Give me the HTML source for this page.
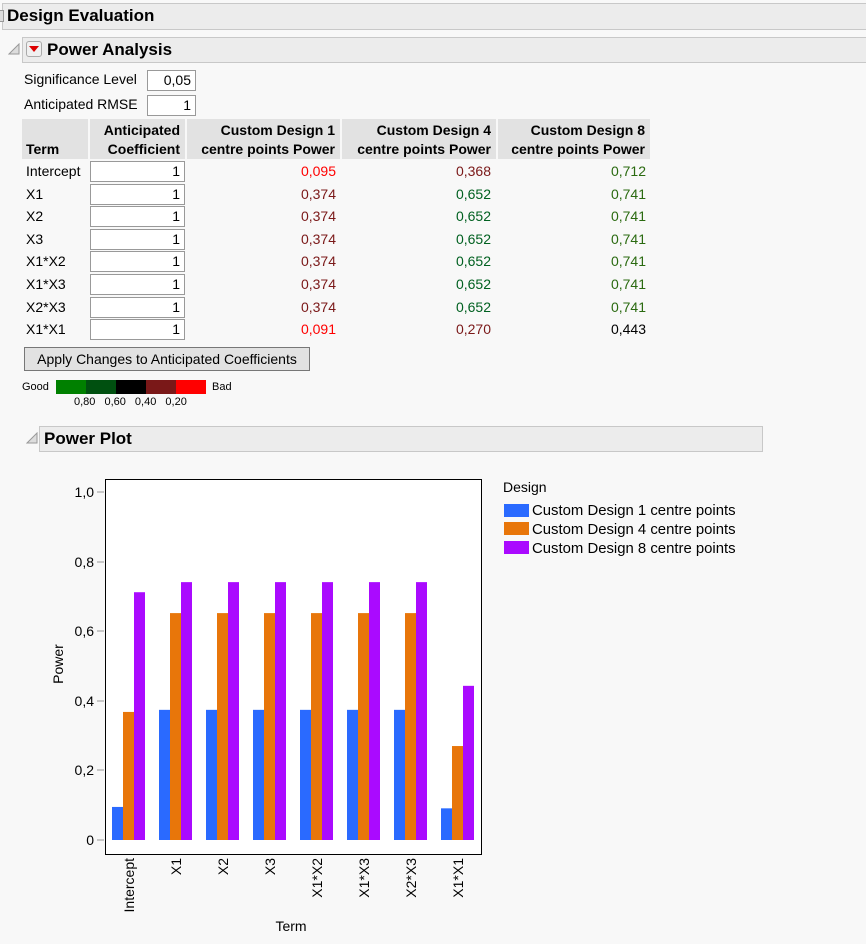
<!DOCTYPE html>
<html><head><style>
body{margin:0;width:866px;height:944px;background:#f8f8f8;font-family:"Liberation Sans",sans-serif;color:#000;position:relative;overflow:hidden;font-size:14px}
.a{position:absolute;white-space:nowrap}
.bar{position:absolute;background:#ececec;border:1px solid #c8c8c8;font-weight:bold;font-size:17px;line-height:24px;padding-left:4px;box-sizing:border-box}
.inp{position:absolute;background:#fff;border:1px solid #999;box-sizing:border-box;text-align:right;padding-right:4px;line-height:19px;font-size:14px}
.th{position:absolute;background:#e2e2e2;font-weight:bold;text-align:right;font-size:14px;line-height:19px;box-sizing:border-box;padding-right:5px}
.r{position:absolute;text-align:right;font-size:14px}
</style></head><body>
<div class="bar" style="left:2px;top:3px;width:870px;height:27px;font-size:17px">Design Evaluation</div>
<div class="a" style="left:-3px;top:10px;width:5px;height:10px;border:1px solid #999;background:#ddd"></div>
<svg class="a" style="left:8px;top:43px" width="12" height="12"><path d="M1 11 L11 1 L11 11Z" fill="#ddd" stroke="#999"/></svg>
<div class="bar" style="left:22px;top:37px;width:850px;height:26px;padding-left:24px">Power Analysis</div>
<div class="a" style="left:26px;top:41px;width:16px;height:16px;border:1px solid #aaa;border-radius:3px;background:#f0f0f0;box-sizing:border-box"></div>
<svg class="a" style="left:29px;top:45px" width="10" height="8"><path d="M0 1 L10 1 L5 7Z" fill="#d00"/></svg>
<div class="a" style="left:24px;top:71px">Significance Level</div>
<div class="inp" style="left:147px;top:70px;width:49px;height:21px">0,05</div>
<div class="a" style="left:24px;top:96px">Anticipated RMSE</div>
<div class="inp" style="left:147px;top:95px;width:49px;height:21px">1</div>
<div class="th" style="left:22px;top:119px;width:66px;height:40px;text-align:left;padding:21px 0 0 4px">Term</div>
<div class="th" style="left:90px;top:119px;width:95px;height:40px;padding-top:2px">Anticipated<br>Coefficient</div>
<div class="th" style="left:187px;top:119px;width:153px;height:40px;padding-top:2px">Custom Design 1<br>centre points Power</div>
<div class="th" style="left:342px;top:119px;width:154px;height:40px;padding-top:2px">Custom Design 4<br>centre points Power</div>
<div class="th" style="left:498px;top:119px;width:152px;height:40px;padding-top:2px">Custom Design 8<br>centre points Power</div>
<div id="rows"></div>
<div class="a" style="left:24px;top:347px;width:286px;height:24px;border:1px solid #777;background:#e2e2e2;box-sizing:border-box;line-height:22px;text-align:center;font-size:14px">Apply Changes to Anticipated Coefficients</div>
<div class="a" style="left:22px;top:381px;font-size:11px">Good</div>
<div class="a" style="left:56px;top:380px;width:30px;height:14px;background:#008000"></div>
<div class="a" style="left:86px;top:380px;width:30px;height:14px;background:#005010"></div>
<div class="a" style="left:116px;top:380px;width:30px;height:14px;background:#000"></div>
<div class="a" style="left:146px;top:380px;width:30px;height:14px;background:#7a1818"></div>
<div class="a" style="left:176px;top:380px;width:30px;height:14px;background:#ff0000"></div>
<div class="a" style="left:212px;top:381px;font-size:11px">Bad</div>
<div class="a" style="left:74px;top:396px;font-size:11px;word-spacing:6px">0,80 0,60 0,40 0,20</div>
<svg class="a" style="left:26px;top:432px" width="12" height="12"><path d="M1 11 L11 1 L11 11Z" fill="#ddd" stroke="#999"/></svg>
<div class="bar" style="left:39px;top:426px;width:724px;height:26px">Power Plot</div>
<svg class="a" style="left:0;top:460px" width="866" height="484" font-family="Liberation Sans, sans-serif" font-size="14">
<g transform="translate(0,-460)">
<rect x="105.5" y="479.5" width="376" height="375" fill="#fff" stroke="#000"/>
<g id="bars"></g>
<g fill="#000" text-anchor="end">
<text x="94" y="497">1,0</text><text x="94" y="567">0,8</text><text x="94" y="636">0,6</text><text x="94" y="706">0,4</text><text x="94" y="775">0,2</text><text x="94" y="845">0</text>
</g>
<g stroke="#999"><line x1="97" x2="104" y1="492" y2="492"/><line x1="97" x2="104" y1="562" y2="562"/><line x1="97" x2="104" y1="631" y2="631"/><line x1="97" x2="104" y1="701" y2="701"/><line x1="97" x2="104" y1="770" y2="770"/><line x1="97" x2="104" y1="840" y2="840"/></g>
<text transform="translate(63,664) rotate(-90)" text-anchor="middle">Power</text>
<g text-anchor="end" id="xl"></g>
<text x="291" y="931" text-anchor="middle">Term</text>
<text x="503" y="492">Design</text>
<g font-size="14.9">
<rect x="504" y="504" width="25" height="13" fill="#2a6aff"/><text x="532" y="515">Custom Design 1 centre points</text>
<rect x="504" y="522" width="25" height="13" fill="#e8760a"/><text x="532" y="534">Custom Design 4 centre points</text>
<rect x="504" y="541" width="25" height="13" fill="#aa0aff"/><text x="532" y="553">Custom Design 8 centre points</text>
</g>
</g></svg>
<script>
var terms=["Intercept","X1","X2","X3","X1*X2","X1*X3","X2*X3","X1*X1"];
var d=[[.095,.368,.712],[.374,.652,.741],[.374,.652,.741],[.374,.652,.741],[.374,.652,.741],[.374,.652,.741],[.374,.652,.741],[.091,.270,.443]];
var h="";
for(var i=0;i<8;i++){var y=160+i*22.6;
h+='<div class="a" style="left:26px;top:'+(y+3)+'px">'+terms[i]+'</div>';
h+='<div class="inp" style="left:90px;top:'+(y+1)+'px;width:95px;height:21px">1</div>';
var xs=[336,491,646];var v=d[i];
var cs=[v[0]<.2?"#ff0000":"#7a1818",v[1]<.6?"#7a1818":"#006020",v[2]<.6?"#000":"#2a6a10"];
for(var j=0;j<3;j++)h+='<div class="r" style="left:'+(xs[j]-60)+'px;width:60px;top:'+(y+3)+'px;color:'+cs[j]+'">'+v[j].toFixed(3).replace(".",",")+'</div>';}
document.getElementById("rows").innerHTML=h;
var b="",cl=["#2a6aff","#e8760a","#aa0aff"],xl="";
for(var i=0;i<8;i++){for(var j=0;j<3;j++){var x=112+i*47+j*11,hh=d[i][j]*348;b+='<rect x="'+x+'" y="'+(840-hh)+'" width="11" height="'+hh+'" fill="'+cl[j]+'"/>';}
xl+='<text transform="translate('+(134+i*47)+',858) rotate(-90)">'+terms[i]+'</text>';}
document.getElementById("bars").innerHTML=b;document.getElementById("xl").innerHTML=xl;
</script>
</body></html>
